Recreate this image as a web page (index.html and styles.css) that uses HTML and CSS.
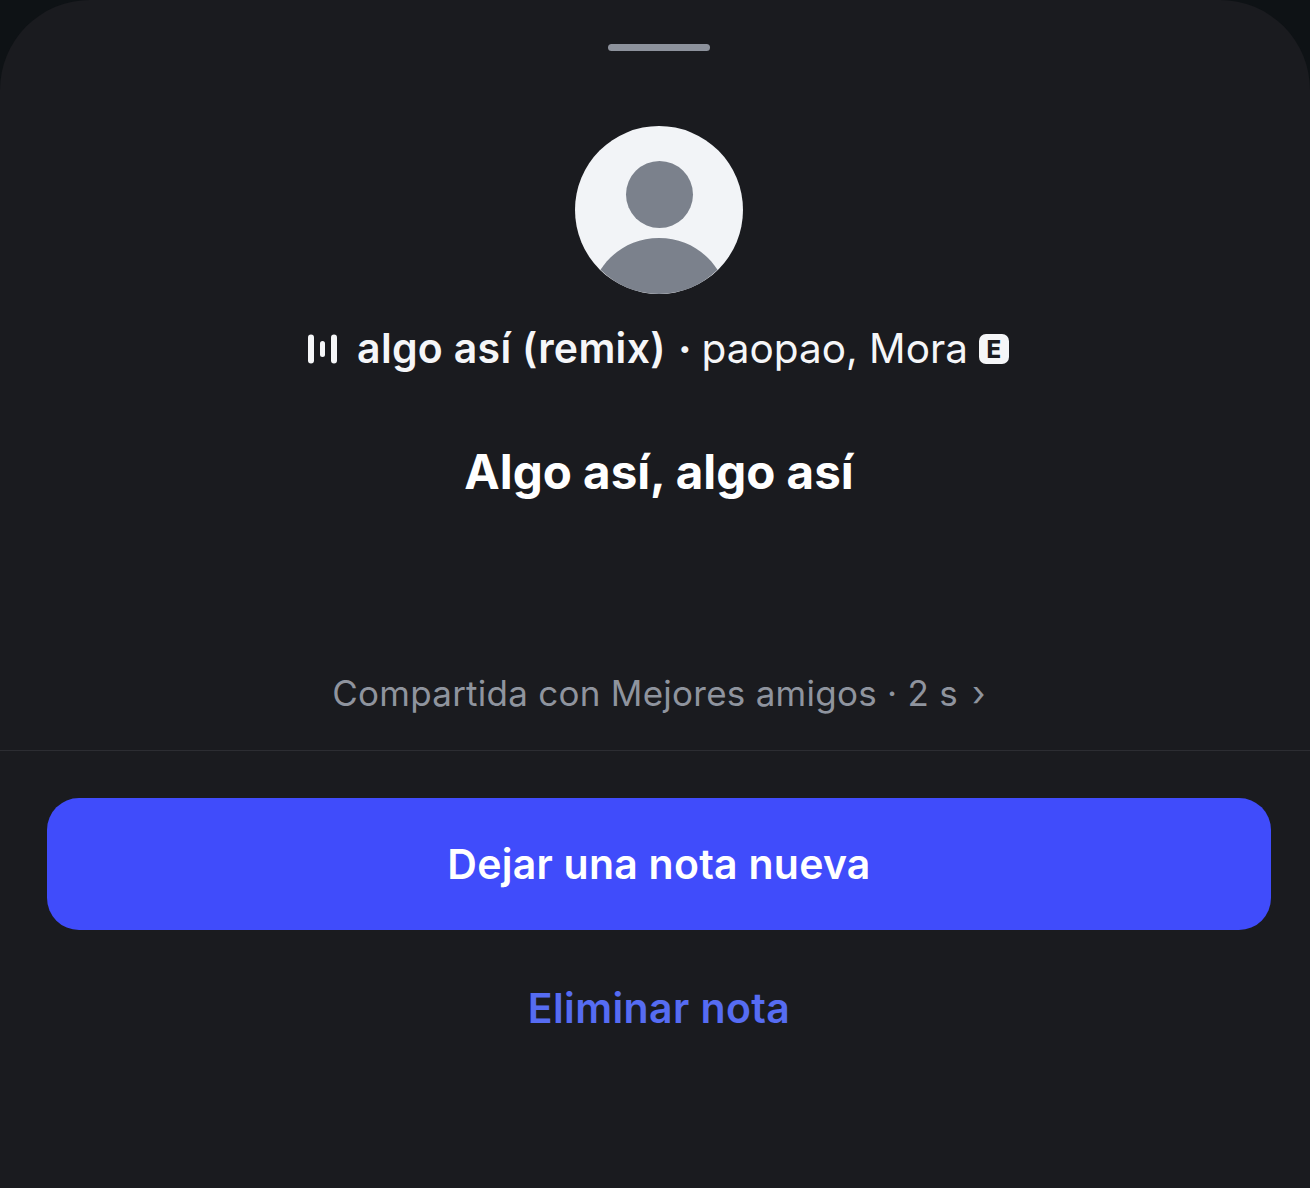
FILE: index.html
```html
<!DOCTYPE html>
<html lang="es">
<head>
    <meta charset="UTF-8">
    <meta name="viewport" content="width=device-width, initial-scale=1.0">
    <title>Nota</title>
    <link rel="stylesheet" href="styles.css">
</head>
<body>
    <div class="sheet">
        <div class="handle"></div>

        <svg class="avatar" viewBox="0 0 168 168" aria-hidden="true">
            <circle cx="84" cy="84" r="84" fill="#f2f4f7"/>
            <circle cx="84.500" cy="68.500" r="33.500" fill="#7b818c"/>
            <path d="M25.500 143.800C38 124.500 59 112 84 112s46 12.500 58.500 31.800A84 84 0 0 1 84 168a84 84 0 0 1-58.500-24.200z" fill="#7b818c"/>
        </svg>

        <div class="song">
            <svg class="bars" viewBox="0 0 32 32" aria-hidden="true">
                <rect x="1" y="1.500" width="6" height="29" rx="3"/>
                <rect x="13" y="8" width="5" height="16" rx="2.500"/>
                <rect x="24" y="1.500" width="6" height="29" rx="3"/>
            </svg>
            <span class="song-title">algo así (remix)</span>
            <span class="song-dot">·</span>
            <span class="song-artist">paopao, Mora</span>
            <span class="explicit">E</span>
        </div>

        <h1 class="note">Algo así, algo así</h1>

        <p class="meta">Compartida con Mejores amigos · 2 s <span class="chevron">›</span></p>

        <div class="divider"></div>

        <div class="actions">
            <button class="btn-primary">Dejar una nota nueva</button>
            <button class="btn-link">Eliminar nota</button>
        </div>
    </div>
</body>
</html>
```

FILE: styles.css
```css
html, body {
    margin: 0;
    padding: 0;
    height: 100%;
}
body {
    font-family: Inter, 'Noto Sans', sans-serif;
    background-color: #0e1215;
    color: #ffffff;
    overflow: hidden;
}
.sheet {
    height: 1188px;
    background-color: #1a1b1f;
    border-radius: 90px 90px 0 0;
    display: flex;
    flex-direction: column;
    align-items: center;
    box-sizing: border-box;
    padding: 44px 0 0 8px;
}
.handle {
    width: 102px;
    height: 7px;
    border-radius: 4px;
    background-color: #8d929c;
}
.avatar {
    width: 168px;
    height: 168px;
    margin-top: 75px;
}
.song {
    display: flex;
    align-items: center;
    height: 50px;
    margin-top: 30px;
    padding-right: 2px;
    color: #f5f6f8;
}
.bars {
    width: 32px;
    height: 32px;
    fill: #f5f6f8;
    margin-right: 18px;
}
.song-title {
    font-size: 41px;
    font-weight: 600;
    letter-spacing: 0.3px;
    position: relative;
    top: -1px;
}
.song-dot {
    margin: 0 10px 0 12px;
    font-size: 41px;
    font-weight: 700;
}
.song-artist {
    font-size: 40.5px;
    font-weight: 400;
    position: relative;
    top: -1px;
}
.explicit {
    display: flex;
    align-items: center;
    justify-content: center;
    width: 30px;
    height: 30px;
    margin-left: 11px;
    border-radius: 7px;
    background-color: #f5f6f8;
    color: #1a1b1f;
    font-size: 24px;
    font-weight: 800;
}
.note {
    margin: 71px 0 0;
    font-size: 47.5px;
    line-height: 54px;
    font-weight: 700;
}
.meta {
    margin: 172px 0 0;
    font-size: 35px;
    line-height: 44px;
    letter-spacing: 0.26px;
    color: #8f949e;
}
.chevron {
    margin-left: 4px;
}
.divider {
    align-self: stretch;
    height: 1px;
    margin: 35px 0 0 -8px;
    background-color: #2c2d32;
}
.actions {
    width: 100%;
    box-sizing: border-box;
    padding: 47px 39px 0;
    display: flex;
    flex-direction: column;
    align-items: center;
}
.btn-primary {
    width: 100%;
    height: 132px;
    border: none;
    border-radius: 32px;
    background-color: #404cfb;
    color: #ffffff;
    font-family: inherit;
    font-size: 41px;
    letter-spacing: 0.25px;
    font-weight: 600;
}
.btn-link {
    margin-top: 53px;
    padding: 0;
    border: none;
    background: none;
    color: #566cf2;
    font-family: inherit;
    font-size: 41px;
    letter-spacing: 0.4px;
    line-height: 50px;
    font-weight: 600;
}
```
